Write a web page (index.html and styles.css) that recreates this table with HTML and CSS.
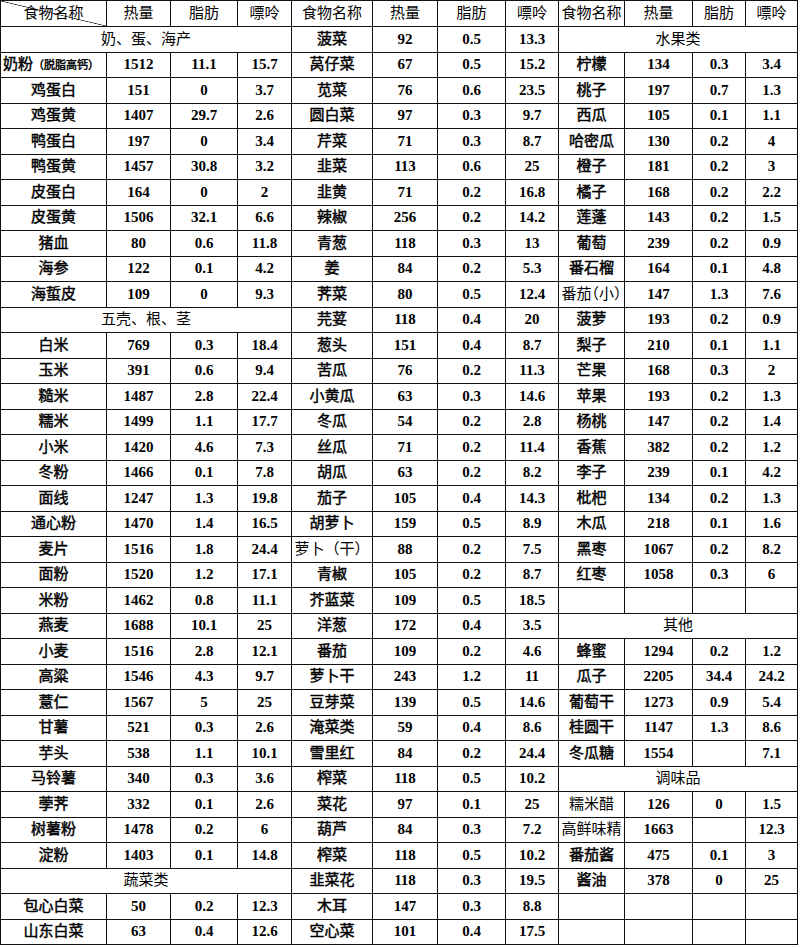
FILE: index.html
```html
<!DOCTYPE html>
<html lang="zh-CN">
<head>
<meta charset="utf-8">
<title>食物热量、脂肪、嘌呤表</title>
<link rel="stylesheet" href="styles.css">
</head>
<body>
<table class="food">
<colgroup>
<col class="c-name1"><col class="c-kcal1"><col class="c-fat1"><col class="c-pur1">
<col class="c-name2"><col class="c-kcal2"><col class="c-fat2"><col class="c-pur2">
<col class="c-name3"><col class="c-kcal3"><col class="c-fat3"><col class="c-pur3">
</colgroup>
<tr class="hd">
<td class="diag">食物名称</td><td>热量</td><td>脂肪</td><td>嘌呤</td>
<td>食物名称</td><td>热量</td><td>脂肪</td><td>嘌呤</td>
<td>食物名称</td><td>热量</td><td>脂肪</td><td>嘌呤</td>
</tr>
<tr><td class="sec" colspan="4">奶、蛋、海产</td><td class="nm">菠菜</td><td>92</td><td>0.5</td><td>13.3</td><td class="sec" colspan="4">水果类</td></tr>
<tr><td class="nm left">奶粉<span class="sm">（脱脂高钙）</span></td><td>1512</td><td>11.1</td><td>15.7</td><td class="nm">莴仔菜</td><td>67</td><td>0.5</td><td>15.2</td><td class="nm">柠檬</td><td>134</td><td>0.3</td><td>3.4</td></tr>
<tr><td class="nm">鸡蛋白</td><td>151</td><td>0</td><td>3.7</td><td class="nm">苋菜</td><td>76</td><td>0.6</td><td>23.5</td><td class="nm">桃子</td><td>197</td><td>0.7</td><td>1.3</td></tr>
<tr><td class="nm">鸡蛋黄</td><td>1407</td><td>29.7</td><td>2.6</td><td class="nm">圆白菜</td><td>97</td><td>0.3</td><td>9.7</td><td class="nm">西瓜</td><td>105</td><td>0.1</td><td>1.1</td></tr>
<tr><td class="nm">鸭蛋白</td><td>197</td><td>0</td><td>3.4</td><td class="nm">芹菜</td><td>71</td><td>0.3</td><td>8.7</td><td class="nm">哈密瓜</td><td>130</td><td>0.2</td><td>4</td></tr>
<tr><td class="nm">鸭蛋黄</td><td>1457</td><td>30.8</td><td>3.2</td><td class="nm">韭菜</td><td>113</td><td>0.6</td><td>25</td><td class="nm">橙子</td><td>181</td><td>0.2</td><td>3</td></tr>
<tr><td class="nm">皮蛋白</td><td>164</td><td>0</td><td>2</td><td class="nm">韭黄</td><td>71</td><td>0.2</td><td>16.8</td><td class="nm">橘子</td><td>168</td><td>0.2</td><td>2.2</td></tr>
<tr><td class="nm">皮蛋黄</td><td>1506</td><td>32.1</td><td>6.6</td><td class="nm">辣椒</td><td>256</td><td>0.2</td><td>14.2</td><td class="nm">莲蓬</td><td>143</td><td>0.2</td><td>1.5</td></tr>
<tr><td class="nm">猪血</td><td>80</td><td>0.6</td><td>11.8</td><td class="nm">青葱</td><td>118</td><td>0.3</td><td>13</td><td class="nm">葡萄</td><td>239</td><td>0.2</td><td>0.9</td></tr>
<tr><td class="nm">海参</td><td>122</td><td>0.1</td><td>4.2</td><td class="nm">姜</td><td>84</td><td>0.2</td><td>5.3</td><td class="nm">番石榴</td><td>164</td><td>0.1</td><td>4.8</td></tr>
<tr><td class="nm">海蜇皮</td><td>109</td><td>0</td><td>9.3</td><td class="nm">荠菜</td><td>80</td><td>0.5</td><td>12.4</td><td class="n halt">番茄（小）</td><td>147</td><td>1.3</td><td>7.6</td></tr>
<tr><td class="sec" colspan="4">五壳、根、茎</td><td class="nm">芫荽</td><td>118</td><td>0.4</td><td>20</td><td class="nm">菠萝</td><td>193</td><td>0.2</td><td>0.9</td></tr>
<tr><td class="nm">白米</td><td>769</td><td>0.3</td><td>18.4</td><td class="nm">葱头</td><td>151</td><td>0.4</td><td>8.7</td><td class="nm">梨子</td><td>210</td><td>0.1</td><td>1.1</td></tr>
<tr><td class="nm">玉米</td><td>391</td><td>0.6</td><td>9.4</td><td class="nm">苦瓜</td><td>76</td><td>0.2</td><td>11.3</td><td class="nm">芒果</td><td>168</td><td>0.3</td><td>2</td></tr>
<tr><td class="nm">糙米</td><td>1487</td><td>2.8</td><td>22.4</td><td class="nm">小黄瓜</td><td>63</td><td>0.3</td><td>14.6</td><td class="nm">苹果</td><td>193</td><td>0.2</td><td>1.3</td></tr>
<tr><td class="nm">糯米</td><td>1499</td><td>1.1</td><td>17.7</td><td class="nm">冬瓜</td><td>54</td><td>0.2</td><td>2.8</td><td class="nm">杨桃</td><td>147</td><td>0.2</td><td>1.4</td></tr>
<tr><td class="nm">小米</td><td>1420</td><td>4.6</td><td>7.3</td><td class="nm">丝瓜</td><td>71</td><td>0.2</td><td>11.4</td><td class="nm">香蕉</td><td>382</td><td>0.2</td><td>1.2</td></tr>
<tr><td class="nm">冬粉</td><td>1466</td><td>0.1</td><td>7.8</td><td class="nm">胡瓜</td><td>63</td><td>0.2</td><td>8.2</td><td class="nm">李子</td><td>239</td><td>0.1</td><td>4.2</td></tr>
<tr><td class="nm">面线</td><td>1247</td><td>1.3</td><td>19.8</td><td class="nm">茄子</td><td>105</td><td>0.4</td><td>14.3</td><td class="nm">枇杷</td><td>134</td><td>0.2</td><td>1.3</td></tr>
<tr><td class="nm">通心粉</td><td>1470</td><td>1.4</td><td>16.5</td><td class="nm">胡萝卜</td><td>159</td><td>0.5</td><td>8.9</td><td class="nm">木瓜</td><td>218</td><td>0.1</td><td>1.6</td></tr>
<tr><td class="nm">麦片</td><td>1516</td><td>1.8</td><td>24.4</td><td class="n">萝卜（干）</td><td>88</td><td>0.2</td><td>7.5</td><td class="nm">黑枣</td><td>1067</td><td>0.2</td><td>8.2</td></tr>
<tr><td class="nm">面粉</td><td>1520</td><td>1.2</td><td>17.1</td><td class="nm">青椒</td><td>105</td><td>0.2</td><td>8.7</td><td class="nm">红枣</td><td>1058</td><td>0.3</td><td>6</td></tr>
<tr><td class="nm">米粉</td><td>1462</td><td>0.8</td><td>11.1</td><td class="nm">芥蓝菜</td><td>109</td><td>0.5</td><td>18.5</td><td></td><td></td><td></td><td></td></tr>
<tr><td class="nm">燕麦</td><td>1688</td><td>10.1</td><td>25</td><td class="nm">洋葱</td><td>172</td><td>0.4</td><td>3.5</td><td class="sec" colspan="4">其他</td></tr>
<tr><td class="nm">小麦</td><td>1516</td><td>2.8</td><td>12.1</td><td class="nm">番茄</td><td>109</td><td>0.2</td><td>4.6</td><td class="nm">蜂蜜</td><td>1294</td><td>0.2</td><td>1.2</td></tr>
<tr><td class="nm">高粱</td><td>1546</td><td>4.3</td><td>9.7</td><td class="nm">萝卜干</td><td>243</td><td>1.2</td><td>11</td><td class="nm">瓜子</td><td>2205</td><td>34.4</td><td>24.2</td></tr>
<tr><td class="nm">薏仁</td><td>1567</td><td>5</td><td>25</td><td class="nm">豆芽菜</td><td>139</td><td>0.5</td><td>14.6</td><td class="nm">葡萄干</td><td>1273</td><td>0.9</td><td>5.4</td></tr>
<tr><td class="nm">甘薯</td><td>521</td><td>0.3</td><td>2.6</td><td class="nm">淹菜类</td><td>59</td><td>0.4</td><td>8.6</td><td class="nm">桂圆干</td><td>1147</td><td>1.3</td><td>8.6</td></tr>
<tr><td class="nm">芋头</td><td>538</td><td>1.1</td><td>10.1</td><td class="nm">雪里红</td><td>84</td><td>0.2</td><td>24.4</td><td class="nm">冬瓜糖</td><td>1554</td><td></td><td>7.1</td></tr>
<tr><td class="nm">马铃薯</td><td>340</td><td>0.3</td><td>3.6</td><td class="nm">榨菜</td><td>118</td><td>0.5</td><td>10.2</td><td class="sec" colspan="4">调味品</td></tr>
<tr><td class="nm">荸荠</td><td>332</td><td>0.1</td><td>2.6</td><td class="nm">菜花</td><td>97</td><td>0.1</td><td>25</td><td class="n">糯米醋</td><td>126</td><td>0</td><td>1.5</td></tr>
<tr><td class="nm">树薯粉</td><td>1478</td><td>0.2</td><td>6</td><td class="nm">葫芦</td><td>84</td><td>0.3</td><td>7.2</td><td class="n">高鲜味精</td><td>1663</td><td></td><td>12.3</td></tr>
<tr><td class="nm">淀粉</td><td>1403</td><td>0.1</td><td>14.8</td><td class="nm">榨菜</td><td>118</td><td>0.5</td><td>10.2</td><td class="nm">番茄酱</td><td>475</td><td>0.1</td><td>3</td></tr>
<tr><td class="sec" colspan="4">蔬菜类</td><td class="nm">韭菜花</td><td>118</td><td>0.3</td><td>19.5</td><td class="nm">酱油</td><td>378</td><td>0</td><td>25</td></tr>
<tr><td class="nm">包心白菜</td><td>50</td><td>0.2</td><td>12.3</td><td class="nm">木耳</td><td>147</td><td>0.3</td><td>8.8</td><td></td><td></td><td></td><td></td></tr>
<tr><td class="nm">山东白菜</td><td>63</td><td>0.4</td><td>12.6</td><td class="nm">空心菜</td><td>101</td><td>0.4</td><td>17.5</td><td></td><td></td><td></td><td></td></tr>
</table>
</body>
</html>
```
FILE: styles.css
```css
html, body {
  margin: 0;
  padding: 0;
  background: #ffffff;
}

.food {
  border-collapse: separate;
  border-spacing: 0;
  table-layout: fixed;
  width: 798px;
  border-top: 1px solid #111;
  border-left: 1px solid #111;
  font-family: "Liberation Serif", "Noto Sans CJK SC", serif;
  font-size: 15px;
  font-weight: 700;
  color: #000;
}

.c-name1 { width: 106px; }
.c-kcal1 { width: 64px; }
.c-fat1 { width: 67px; }
.c-pur1 { width: 54px; }
.c-name2 { width: 81px; }
.c-kcal2 { width: 65px; }
.c-fat2 { width: 68px; }
.c-pur2 { width: 53px; }
.c-name3 { width: 66px; }
.c-kcal3 { width: 68px; }
.c-fat3 { width: 53px; }
.c-pur3 { width: 52px; }

.food td {
  box-sizing: border-box;
  height: 25.5px;
  padding: 0;
  border-right: 1px solid #111;
  border-bottom: 1px solid #111;
  text-align: center;
  vertical-align: middle;
  line-height: 1;
  white-space: nowrap;
}

.food .hd td {
  height: 26px;
  font-weight: 400;
}

.food td.diag {
  background: linear-gradient(to top right, transparent calc(50% - 0.7px), #222 50%, transparent calc(50% + 0.7px));
}

.food td.sec,
.food td.n {
  font-weight: 400;
}

.food td.nm {
  font-weight: 400;
  -webkit-text-stroke: 0.45px #000;
}

.food td.left {
  text-align: left;
  padding-left: 2px;
}

.sm {
  font-size: 11px;
}

.halt {
  font-feature-settings: "halt";
}
```
